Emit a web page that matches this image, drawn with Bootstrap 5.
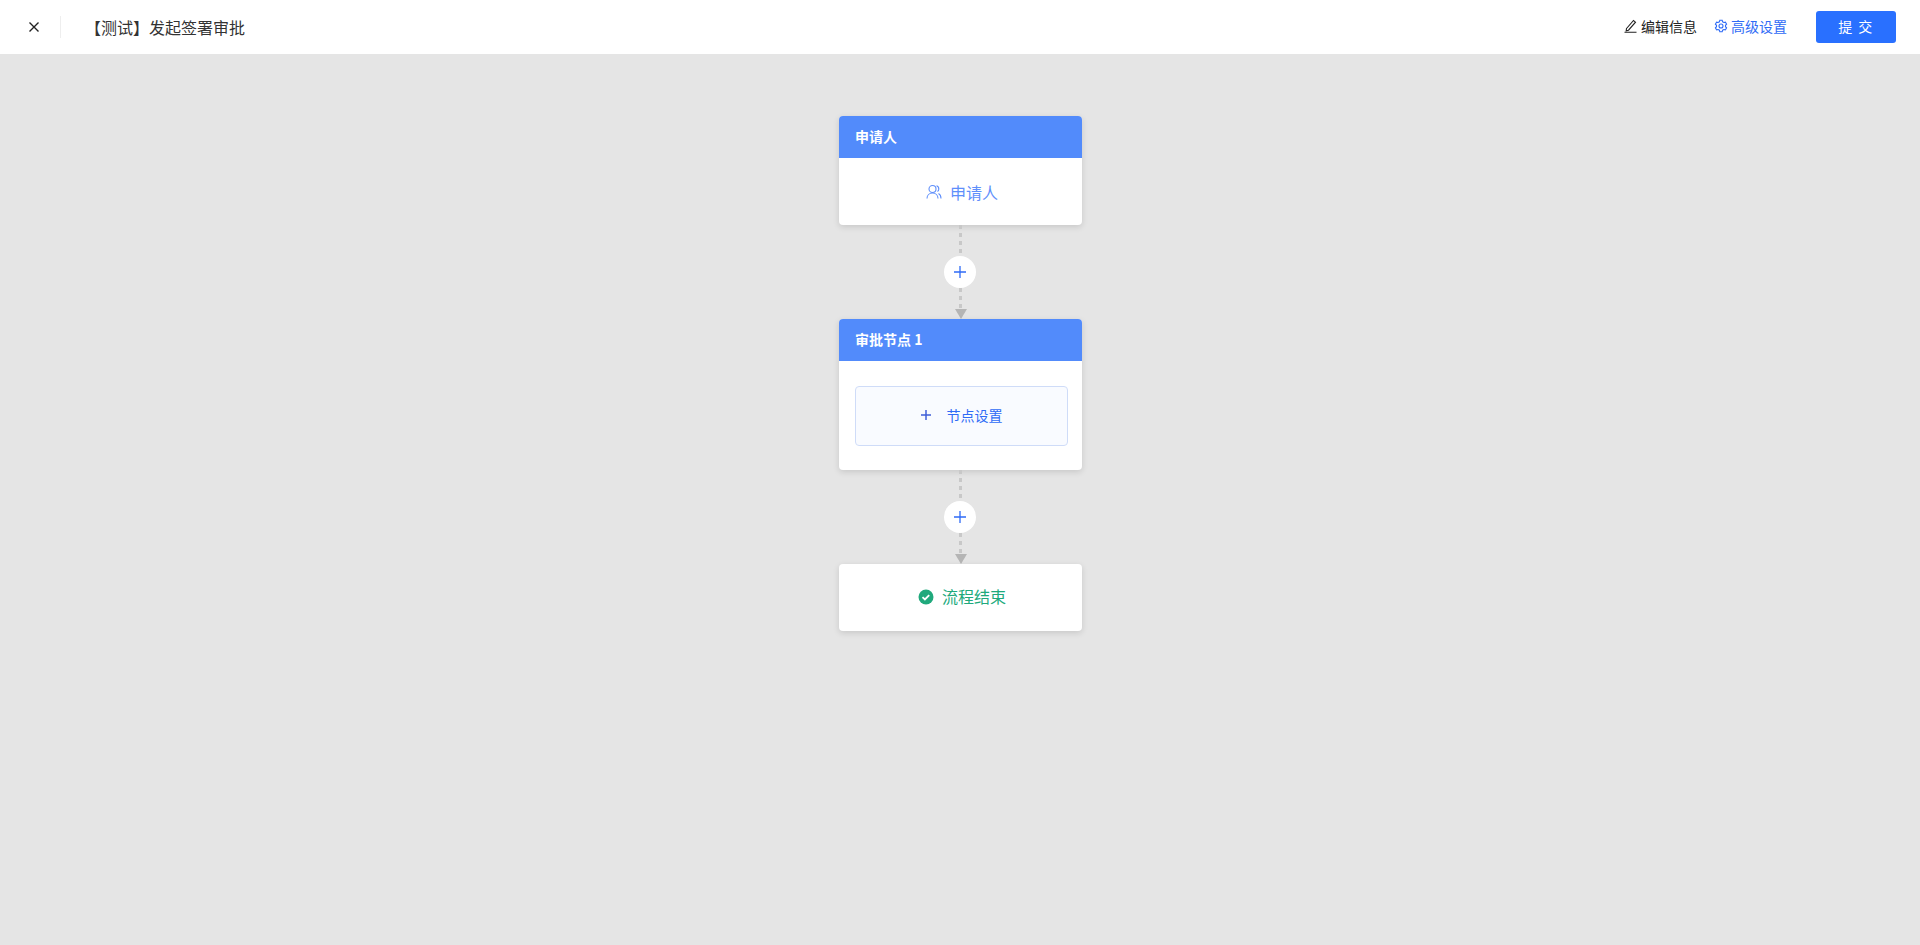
<!DOCTYPE html>
<html lang="zh-CN">
<head>
    <meta charset="UTF-8">
    <meta name="viewport" content="width=device-width, initial-scale=1.0">
    <title>发起签署审批</title>
    <link href="https://cdn.jsdelivr.net/npm/bootstrap@5.3.0/dist/css/bootstrap.min.css" rel="stylesheet">
    <style>
        body {
            background-color: #e5e5e5;
            font-family: "Noto Sans CJK SC", "Liberation Sans", sans-serif;
            min-height: 945px;
            overflow: hidden;
        }
        .topbar {
            height: 54px;
            background-color: #fff;
            padding-left: 28px;
            padding-right: 24px;
        }
        .close-x {
            width: 12px;
            height: 12px;
            color: #222;
        }
        .top-divider {
            width: 1px;
            height: 22px;
            background-color: #eee;
            margin-left: 20px;
            margin-right: 24px;
        }
        .page-title {
            font-size: 16px;
            color: #333;
            padding-bottom: 1px;
        }
        .top-link {
            font-size: 14px;
            line-height: 20px;
            color: #222;
            padding-bottom: 2px;
        }
        .top-link svg {
            margin-right: 3px;
        }
        .top-link-blue {
            color: #2f6bf6;
            margin-left: 17px;
        }
        .btn-submit {
            width: 80px;
            height: 32px;
            margin-left: 29px;
            padding: 0 0 2px;
            font-size: 14px;
            letter-spacing: 1.5px;
            color: #fff;
            background-color: #2970ff;
            border: 0;
            border-radius: 3px;
        }
        .flow {
            padding-top: 62px;
            padding-left: 1px;
        }
        .flow-node {
            width: 243px;
            background-color: #fff;
            border-radius: 4px;
            box-shadow: 0 2px 6px rgba(0, 0, 0, .13);
            overflow: hidden;
        }
        .node-head {
            height: 42px;
            padding-left: 16px;
            padding-bottom: 2px;
            background-color: #528bfb;
            color: #fff;
            font-size: 14px;
            font-weight: 700;
        }
        .node-body {
            height: 67px;
            font-size: 16px;
        }
        .node-blue {
            color: #5f8ffb;
            padding-left: 3px;
        }
        .node-green {
            color: #20a97c;
            padding-left: 3px;
            padding-bottom: 3px;
        }
        .node-green svg {
            margin-top: 1px;
        }
        .node-settings {
            padding: 25px 14px 24px 16px;
        }
        .settings-box {
            height: 60px;
            padding-bottom: 2px;
            background-color: #f9fbff;
            border: 1px solid #cfdcf8;
            border-radius: 4px;
            font-size: 14px;
            color: #2f6bf6;
        }
        .connector {
            width: 32px;
            height: 94px;
            margin-left: -1px;
        }
        .dash {
            width: 3px;
            background-image: repeating-linear-gradient(to bottom, #c8c8c8 0, #c8c8c8 4px, transparent 4px, transparent 8px);
        }
        .dash-top {
            height: 31px;
        }
        .dash-bottom {
            height: 21px;
        }
        .add-circle {
            width: 32px;
            height: 32px;
            background-color: #fff;
            border-radius: 50%;
        }
        .arrow-down {
            width: 0;
            height: 0;
            margin-left: 1px;
            border-left: 6px solid transparent;
            border-right: 6px solid transparent;
            border-top: 10px solid #b5b5b5;
        }
    </style>
</head>
<body>
    <div class="topbar d-flex align-items-center">
        <svg class="close-x" viewBox="0 0 12 12" fill="none" stroke="currentColor" stroke-width="1.4"><path d="M1.500 1.500l9 9M10.500 1.500l-9 9"/></svg>
        <div class="top-divider"></div>
        <div class="page-title">【测试】发起签署审批</div>
        <div class="ms-auto d-flex align-items-center">
            <span class="top-link d-flex align-items-center">
                <svg width="14" height="14" viewBox="0 0 14 14" fill="none" stroke="currentColor" stroke-width="1.1"><path d="M2.500 9.500L9.500 1.500l2 1.700-7 8-2.300.5zM.5 13.300h12"/></svg>
                编辑信息
            </span>
            <span class="top-link top-link-blue d-flex align-items-center">
                <svg width="14" height="14" viewBox="0 0 14 14" fill="none" stroke="currentColor" stroke-width="1.100"><path d="M5.800 1.300h2.400l.4 1.500 1.300.7 1.500-.4 1.200 2.100-1.100 1.100v1.400l1.100 1.100-1.200 2.100-1.500-.4-1.300.7-.4 1.500H5.800l-.4-1.500-1.300-.7-1.500.4L1.400 8.800l1.100-1.100V6.300L1.400 5.200l1.200-2.100 1.500.4 1.300-.7z"/><circle cx="7" cy="7" r="2"/></svg>
                高级设置
            </span>
            <button type="button" class="btn btn-submit">提 交</button>
        </div>
    </div>

    <div class="flow d-flex flex-column align-items-center">
        <div class="flow-node">
            <div class="node-head d-flex align-items-center">申请人</div>
            <div class="node-body node-blue d-flex align-items-center justify-content-center gap-2">
                <svg width="16" height="16" viewBox="0 0 16 16" fill="none" stroke="currentColor" stroke-width="1.100"><circle cx="6.500" cy="5" r="3.500"/><path d="M1 14.500c0-3.200 2.300-5.500 5.500-5.500s5.500 2.300 5.500 5.500M10.500 1.800c1.500.4 2.300 1.700 2.300 3.100 0 1.100-.5 2-1.300 2.600M12.500 9.500c1.500.8 2.500 2.700 2.500 5"/></svg>
                <span>申请人</span>
            </div>
        </div>

        <div class="connector d-flex flex-column align-items-center">
            <div class="dash dash-top"></div>
            <div class="add-circle d-flex align-items-center justify-content-center flex-shrink-0">
                <svg width="12" height="12" viewBox="0 0 12 12" fill="none" stroke="#2f6bf6" stroke-width="1.300"><path d="M6 0v12M0 6h12"/></svg>
            </div>
            <div class="dash dash-bottom"></div>
            <div class="arrow-down"></div>
        </div>

        <div class="flow-node">
            <div class="node-head d-flex align-items-center">审批节点 1</div>
            <div class="node-settings">
                <div class="settings-box d-flex align-items-center justify-content-center">
                    <svg class="me-3" width="10" height="10" viewBox="0 0 10 10" fill="none" stroke="#3f5fd8" stroke-width="1.500"><path d="M5 0v10M0 5h10"/></svg>
                    <span>节点设置</span>
                </div>
            </div>
        </div>

        <div class="connector d-flex flex-column align-items-center">
            <div class="dash dash-top"></div>
            <div class="add-circle d-flex align-items-center justify-content-center flex-shrink-0">
                <svg width="12" height="12" viewBox="0 0 12 12" fill="none" stroke="#2f6bf6" stroke-width="1.300"><path d="M6 0v12M0 6h12"/></svg>
            </div>
            <div class="dash dash-bottom"></div>
            <div class="arrow-down"></div>
        </div>

        <div class="flow-node">
            <div class="node-body node-green d-flex align-items-center justify-content-center gap-2">
                <svg width="16" height="16" viewBox="0 0 16 16"><circle cx="8" cy="8" r="7.500" fill="#20a97c"/><path d="M4.500 8.200l2.400 2.300 4.300-4.400" fill="none" stroke="#fff" stroke-width="1.800"/></svg>
                <span>流程结束</span>
            </div>
        </div>
    </div>
</body>
</html>
